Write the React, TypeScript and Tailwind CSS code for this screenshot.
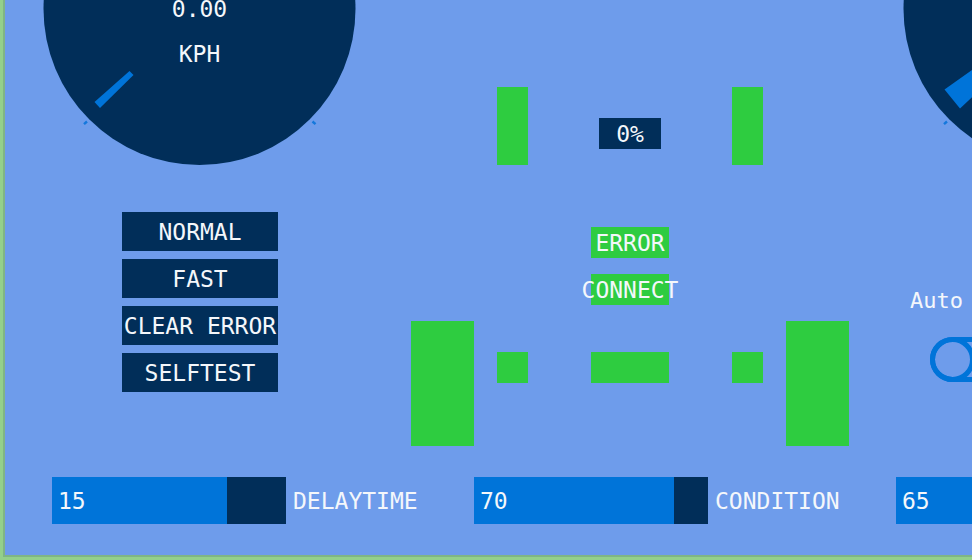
import { useState } from "react";

type GaugeProps = { value?: string; unit?: string; needle: string };

function Gauge({ value, unit, needle }: GaugeProps) {
  return (
    <div className="grid w-[313px] justify-items-center">
      <svg className="[grid-area:1/1]" width="313" height="165" viewBox="0 0 313 165" aria-hidden="true">
        <circle cx="156.5" cy="9" r="156" fill="#012e59" />
        <polygon points={needle} fill="#0074d9" />
        <path d="M41 124.2l3-2.7M269.5 121.5l3 2.7" stroke="#1478dc" strokeWidth="2.4" />
      </svg>
      {value && (
        <div className="flex flex-col items-center gap-[27px] [grid-area:1/1]">
          <output className="leading-[18px]">{value}</output>
          <span className="leading-[18px]">{unit}</span>
        </div>
      )}
    </div>
  );
}

type SliderProps = { id: string; label?: string; initial: number; max: number };

function Slider({ id, label, initial, max }: SliderProps) {
  const [value, setValue] = useState(initial);
  const fill = (value / max) * 100;
  return (
    <div className="flex w-[422px] shrink-0 items-center gap-[7px]">
      <div className="grid w-[234px] items-center">
        <input
          id={id}
          type="range"
          min={0}
          max={max}
          value={value}
          onChange={(e) => setValue(Number(e.target.value))}
          className="h-[47px] w-full appearance-none [grid-area:1/1] [&::-webkit-slider-thumb]:appearance-none"
          style={{ background: `linear-gradient(to right, #0074d9 ${fill}%, #012e59 ${fill}%)` }}
        />
        <output htmlFor={id} className="pointer-events-none pl-[6px] [grid-area:1/1]">
          {value}
        </output>
      </div>
      {label && <label htmlFor={id}>{label}</label>}
    </div>
  );
}

const commands = ["NORMAL", "FAST", "CLEAR ERROR", "SELFTEST"];

export default function App() {
  return (
    <div className="min-h-screen overflow-hidden border-b-3 border-l-3 border-[#93d08b] font-['DejaVu_Sans_Mono',monospace] text-[23px] leading-8 text-[#f4f7fb]">
      <main className="flex min-h-[calc(100vh-3px)] flex-col justify-between overflow-hidden border-b-2 border-l-2 border-[#7fb585] bg-[#6e9ceb] pb-[31px]">
        <div className="grid grid-cols-[314px_438px_313px] gap-x-[54px] pl-[38px]">
          <section className="flex flex-col gap-[47px]">
            <Gauge value="0.00" unit="KPH" needle="86.5,71 90.5,75 57,108 51.5,102" />
            <div className="ml-[79px] flex w-[156px] flex-col gap-2">
              {commands.map((name) => (
                <button key={name} type="button" className="flex h-[39px] items-center justify-center bg-[#012e59] whitespace-nowrap">
                  {name}
                </button>
              ))}
            </div>
          </section>

          <section className="flex flex-col pt-[87px]">
            <div className="flex items-start justify-between px-[86px]">
              <div className="h-[78px] w-[31px] bg-[#2ecc40]" />
              <output className="mt-[31px] flex h-[31px] w-[62px] items-center justify-center bg-[#012e59]">0%</output>
              <div className="h-[78px] w-[31px] bg-[#2ecc40]" />
            </div>
            <div className="flex flex-col items-center gap-4 pt-[62px] pb-4">
              <div className="flex h-[31px] w-[78px] items-center justify-center bg-[#2ecc40]">ERROR</div>
              <div className="flex h-[31px] w-[78px] items-center justify-center bg-[#2ecc40]">CONNECT</div>
            </div>
            <div className="flex items-start justify-between">
              <div className="flex items-start gap-[23px]">
                <div className="h-[125px] w-[63px] bg-[#2ecc40]" />
                <div className="mt-[31px] size-[31px] bg-[#2ecc40]" />
              </div>
              <div className="mt-[31px] h-[31px] w-[78px] bg-[#2ecc40]" />
              <div className="flex items-start gap-[23px]">
                <div className="mt-[31px] size-[31px] bg-[#2ecc40]" />
                <div className="h-[125px] w-[63px] bg-[#2ecc40]" />
              </div>
            </div>
          </section>

          <section className="flex flex-col gap-[120px]">
            <Gauge needle="41.5,89.5 90,55 97,71 57,108.5" />
            <label className="flex flex-col gap-5 pl-[7px] text-[22px]">
              Auto
              <input
                type="checkbox"
                role="switch"
                className="ml-5 h-[45px] w-[94px] appearance-none rounded-full border-5 border-[#0074d9] before:-mt-[5px] before:-ml-[5px] before:block before:size-[45px] before:rounded-full before:border-5 before:border-[#0074d9] checked:before:ml-[44px]"
              />
            </label>
          </section>
        </div>

        <div className="flex pl-[47px]">
          <Slider id="delaytime" label="DELAYTIME" initial={15} max={20} />
          <Slider id="condition" label="CONDITION" initial={70} max={82} />
          <Slider id="level" initial={65} max={75} />
        </div>
      </main>
    </div>
  );
}
